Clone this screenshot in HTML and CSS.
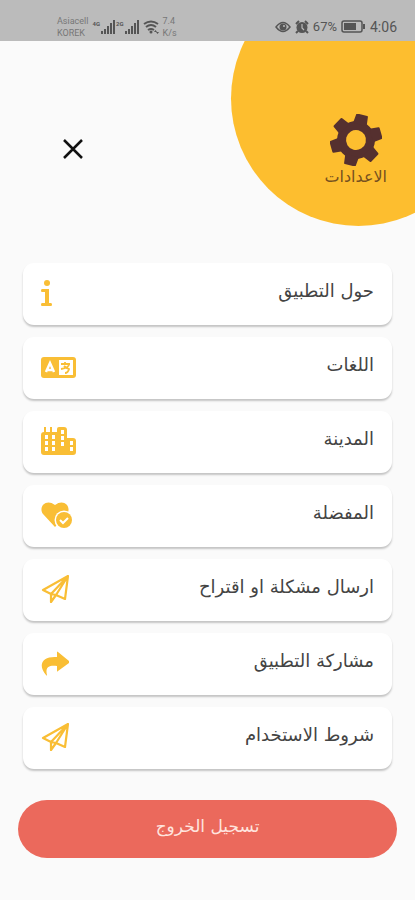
FILE: index.html
```html
<!DOCTYPE html>
<html lang="ar" dir="rtl">
<head>
<meta charset="utf-8">
<meta name="viewport" content="width=device-width, initial-scale=1">
<title>الاعدادات</title>
<link rel="stylesheet" href="styles.css">
</head>
<body>
<svg class="defs" aria-hidden="true">
  <symbol id="signal" viewBox="0 0 14 14"><path d="M0 11h2v3H0zM3 9h2v5H3zM6 6h2v8H6zM9 3h2v11H9zM12 0h2v14h-2z"/></symbol>
  <symbol id="plane" viewBox="0 0 28 28"><path d="M27 1 2 15l8 4L27 1l-3 23-9-4M10 19v8l5-7-5-1M27 1 15 20" fill="none" stroke="currentColor" stroke-width="2.200" stroke-linejoin="round"/></symbol>
</svg>

<div class="status" dir="ltr">
  <div class="status-group">
    <div class="carrier"><span>Asiacell</span><span>KOREK</span></div>
    <div class="network">
      <span class="gen">4G</span><svg class="signal"><use href="#signal"/></svg>
      <span class="gen">2G</span><svg class="signal"><use href="#signal"/></svg>
    </div>
    <svg class="wifi" viewBox="0 0 16 14"><path d="M1 4q7-5 14 0M3 7q5-4 10 0M5 10q3-2 6 0" fill="none" stroke="currentColor" stroke-width="2"/><circle cx="8" cy="12" r="1.5"/><path d="M11 12l1.500-2 1.500 2zM13 12h3l-1.500 2z"/></svg>
    <div class="speed"><span>7.4</span><span>K/s</span></div>
  </div>
  <div class="status-group">
    <svg class="eye" viewBox="0 0 16 12"><path d="M1 6q7-9 14 0-7 9-14 0z" fill="none" stroke="currentColor" stroke-width="1.500"/><circle cx="8" cy="6" r="3.500"/><circle cx="9" cy="5" r="1" fill="#bbb"/></svg>
    <svg class="alarm" viewBox="0 0 14 14"><circle cx="7" cy="7.500" r="5.500"/><path d="M1 4l3-3M13 4l-3-3M3 11l-2 2M11 11l2 2" stroke="currentColor" stroke-width="2"/><path d="M7 4v4l2 2" fill="none" stroke="#bbb" stroke-width="1.200"/></svg>
    <span class="percent">67%</span>
    <svg class="battery" viewBox="0 0 25 13"><rect x="1" y="1" width="20" height="11" rx="2" fill="none" stroke="currentColor" stroke-width="1.500"/><rect x="3" y="3" width="12" height="7"/><path d="M23 4v5" stroke="currentColor" stroke-width="2"/></svg>
    <span class="clock">4:06</span>
  </div>
</div>

<header class="header">
  <div class="title">
    <svg class="gear" viewBox="-26 -26 52 52">
      <g transform="rotate(14)">
        <path fill-rule="evenodd" d="M0-19a19 19 0 1 0 0 38a19 19 0 1 0 0-38zM0-10a10 10 0 1 1 0 20a10 10 0 1 1 0-20z"/>
        <path id="tooth" d="M-7-16-6-25q0-1 1-1H5q1 0 1 1L7-16z"/>
        <use href="#tooth" transform="rotate(60)"/><use href="#tooth" transform="rotate(120)"/><use href="#tooth" transform="rotate(180)"/><use href="#tooth" transform="rotate(240)"/><use href="#tooth" transform="rotate(300)"/>
      </g>
    </svg>
    <h1>الاعدادات</h1>
  </div>
  <button class="close" type="button" aria-label="إغلاق"><svg viewBox="0 0 20 20"><path d="M1 1l18 18M19 1 1 19" stroke="currentColor" stroke-width="2.500"/></svg></button>
</header>

<main>
  <nav class="menu">
    <a href="#about"><span>حول التطبيق</span><svg class="info" viewBox="0 0 12 28"><circle cx="6" cy="4" r="3"/><path d="M1 10h7v14h2q1 0 1 1.500T10 27H1q-1 0-1-1.500T1 24h3V13H1q-1 0-1-1.500T1 10z"/></svg></a>
    <a href="#languages"><span>اللغات</span><svg class="wide" viewBox="0 0 36 28"><rect y="4" width="35" height="21" rx="3"/><path d="M18 7h14v15H18z" fill="#fff"/><path d="M5 19 9 10l4 9M7 17h4" fill="none" stroke="#fff" stroke-width="2.500"/><path d="M20 11h9M24 9v2M28 11q0 4-8 5M23 13q2 2 5 3-1 4-4 4" fill="none" stroke="currentColor" stroke-width="1.800"/></svg></a>
    <a href="#city"><span>المدينة</span><svg class="wide" viewBox="0 0 36 28"><path d="M3 0h2v5h4V0h2v5h5V2q0-2 2-2h5q3 0 3 3v8h6q3 0 3 3v11q0 3-3 3H3q-3 0-3-3V8q0-3 3-3z"/><path d="M4 8h3v4H4zM11 8h3v4h-3zM4 14h3v4H4zM11 14h3v4h-3zM4 20h3v4H4zM11 20h3v4h-3zM20 3h3v4h-3zM20 9h3v4h-3zM20 15h3v4h-3zM29 14h3v4h-3zM29 20h3v4h-3z" fill="#fff"/></svg></a>
    <a href="#favorites"><span>المفضلة</span><svg class="medium" viewBox="0 0 32 28"><path d="M14 26 2 13C-3 6 5-3 14 4c9-7 17 2 12 9z"/><circle cx="23" cy="19" r="9.500" fill="#fff"/><circle cx="23" cy="19" r="8"/><path d="m19 19 3 3 5-5" fill="none" stroke="#fff" stroke-width="2"/></svg></a>
    <a href="#feedback"><span>ارسال مشكلة او اقتراح</span><svg class="small"><use href="#plane"/></svg></a>
    <a href="#share"><span>مشاركة التطبيق</span><svg class="small" viewBox="0 0 28 28"><path d="M16 3q0-1 1 0l11 9q1 1 0 2l-11 8q-1 1-1 0v-5C8 16 4 18 6 26q0 1-1 0C-4 15 2 7 16 8z"/></svg></a>
    <a href="#terms"><span>شروط الاستخدام</span><svg class="small"><use href="#plane"/></svg></a>
  </nav>
  <button class="logout" type="button">تسجيل الخروج</button>
</main>
</body>
</html>
```
FILE: styles.css
```css
* {
  box-sizing: border-box;
}

body {
  margin: 0;
  background: #fafafa;
  color: #444;
  font-family: "DejaVu Sans", sans-serif;
}

svg {
  display: block;
  fill: currentColor;
}

.defs {
  position: absolute;
  width: 0;
  height: 0;
}

.status {
  display: flex;
  justify-content: space-between;
  height: 41px;
  padding: 12px 18px 0 57px;
  background: #bbb;
  color: #555;
  font-family: Roboto, sans-serif;
}

.status-group {
  display: flex;
  align-items: center;
  gap: 4px;
}

.carrier,
.speed {
  display: flex;
  flex-direction: column;
  font-size: 9px;
  line-height: 12px;
  color: #777;
}

.network {
  display: flex;
  gap: 1px;
}

.gen {
  font-size: 6px;
  line-height: 8px;
  font-weight: 700;
}

.signal {
  width: 14px;
  height: 14px;
}

.wifi {
  width: 16px;
  height: 14px;
}

.eye {
  width: 16px;
  height: 12px;
}

.alarm {
  width: 14px;
  height: 14px;
}

.battery {
  width: 25px;
  height: 13px;
}

.percent,
.clock {
  font-size: 14px;
  line-height: 16px;
}

.percent {
  font-size: 13px;
}

.header {
  position: relative;
  display: flex;
  justify-content: space-between;
  align-items: flex-start;
  height: 222px;
  padding: 73px 28px 0 57px;
  overflow: hidden;
}

.header::before {
  content: "";
  position: absolute;
  top: -70px;
  right: -71px;
  width: 255px;
  height: 255px;
  border-radius: 50%;
  background: #fdbe2f;
}

.title {
  position: relative;
  display: flex;
  flex-direction: column;
  align-items: center;
  color: #55302f;
}

.gear {
  width: 52px;
  height: 52px;
}

h1 {
  margin: 0;
  font-size: 16px;
  line-height: 22px;
  font-weight: 400;
  color: #76501f;
}

.close {
  margin: 19px 0 0;
  padding: 6px;
  border: 0;
  background: none;
  color: #111;
}

.close svg {
  width: 20px;
  height: 20px;
}

.menu {
  display: flex;
  flex-direction: column;
  gap: 12px;
  padding: 0 23px;
}

.menu a {
  display: flex;
  justify-content: space-between;
  align-items: center;
  height: 62px;
  padding: 0 18px 2px;
  border-radius: 11px;
  background: #fff;
  box-shadow: 0 2px 2px #c4c4c4;
  color: #444;
  font-size: 18px;
  line-height: 24px;
  text-decoration: none;
}

.menu span {
  padding-bottom: 4px;
}

.menu svg {
  height: 28px;
  color: #f9be35;
}

.menu .info {
  width: 12px;
}

.menu .small {
  width: 28px;
}

.menu .medium {
  width: 32px;
}

.menu .wide {
  width: 36px;
}

.logout {
  display: block;
  width: calc(100% - 36px);
  height: 58px;
  margin: 31px 18px 42px;
  padding: 0 0 6px;
  border: 0;
  border-radius: 29px;
  background: #eb695c;
  color: #ffe4df;
  font: inherit;
  font-size: 17px;
}
```
